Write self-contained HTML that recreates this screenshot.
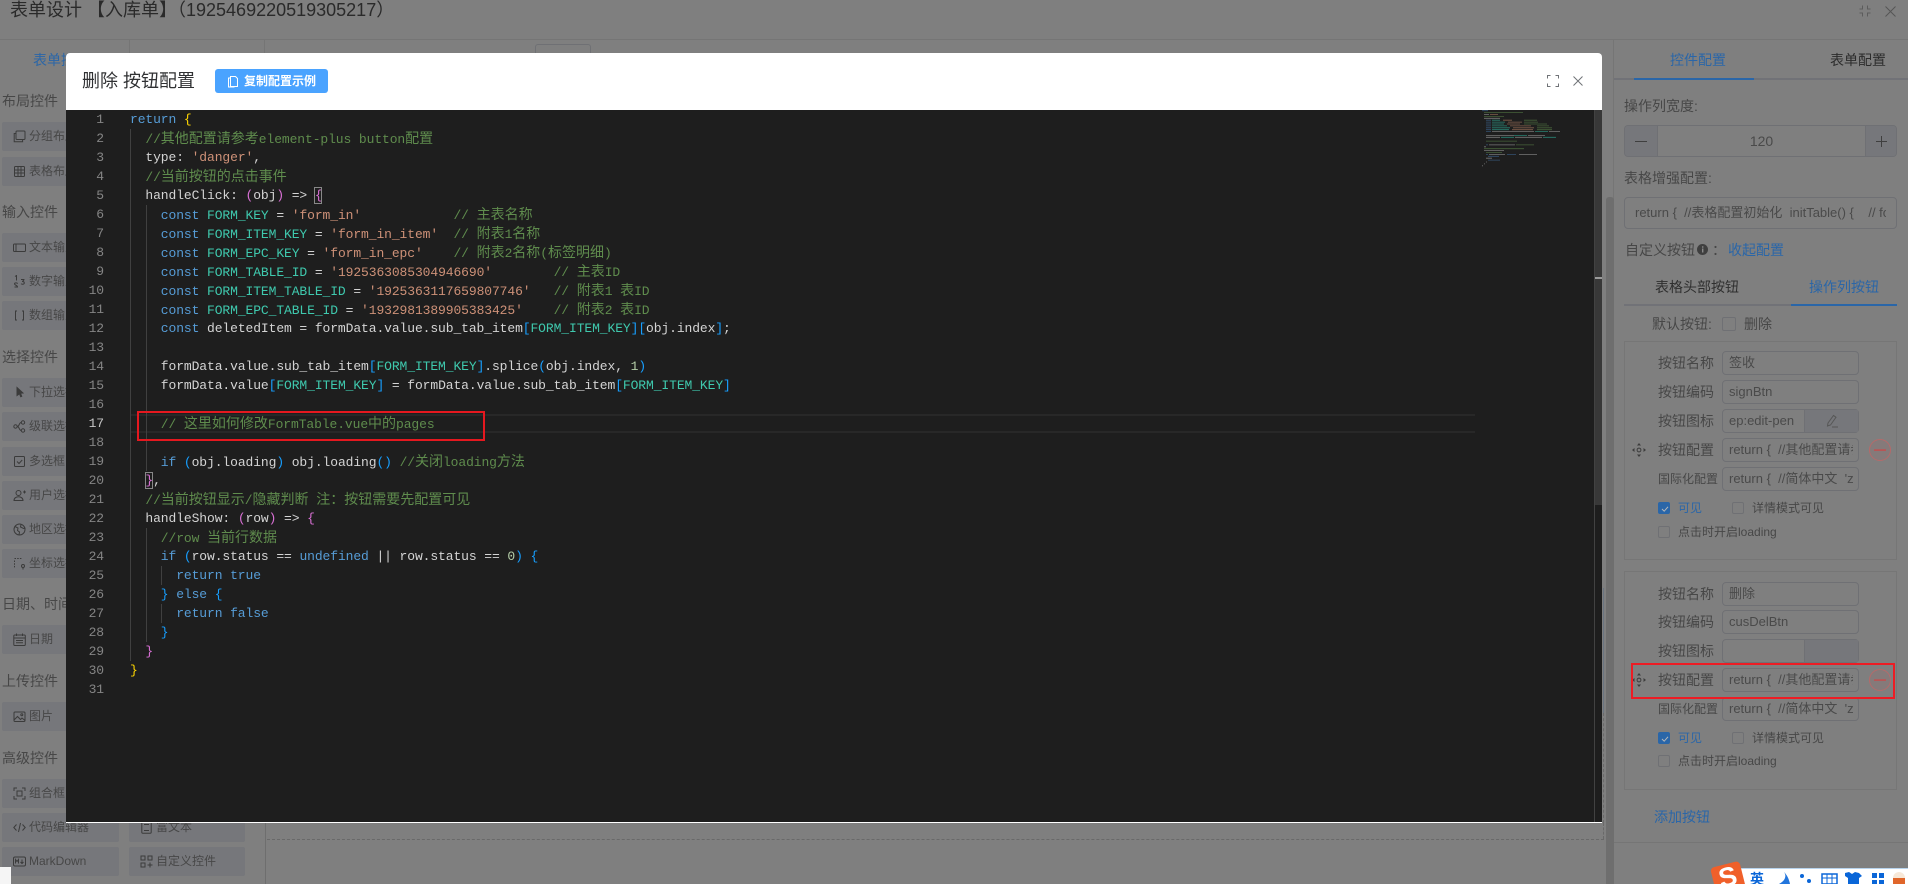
<!DOCTYPE html>
<html lang="zh-CN">
<head>
<meta charset="utf-8">
<title>表单设计</title>
<style>
html,body{margin:0;padding:0;width:1908px;height:884px;overflow:hidden;background:#7f7f7f}
body{position:relative;font-family:"Liberation Sans","Noto Sans CJK SC",sans-serif;font-size:14px;color:#474747}
.a{position:absolute}
.t{position:absolute;white-space:pre;line-height:20px}
.blue{color:#2a66a8 !important}
.lab{position:absolute;left:2px;white-space:pre;line-height:20px;font-size:14px;color:#474747}
.it{position:absolute;width:117px;height:29px;background:#76777b;left:2px;border-radius:2px;font-size:12px;line-height:29px;color:#474747;white-space:pre;overflow:hidden}
.it.r{left:129px;width:116px}
.it span{position:absolute;left:27px;top:0}
.it svg{position:absolute;left:11px;top:8px;width:13px;height:13px;fill:none;stroke:#3b3b3b;stroke-width:1}
.b{position:absolute;box-sizing:border-box;border:1px solid #6f7074;border-radius:4px;overflow:hidden}
.in{position:absolute;left:1722px;width:137px;height:24px;box-sizing:border-box;border:1px solid #6f7074;border-radius:4px;font-size:13px;line-height:22px;color:#4a4a4a;white-space:pre}
.in div{position:absolute;left:6px;right:5px;top:0;height:22px;overflow:hidden}
.fl{position:absolute;left:1658px;width:56px;font-size:14px;line-height:20px;white-space:pre;color:#474747}
.fl.fs{font-size:12px;width:60px}
.card{position:absolute;left:1624px;width:273px;box-sizing:border-box;border:1px solid #767676}
.cb{position:absolute;width:12px;height:12px;box-sizing:border-box;border:1px solid #6f7074;border-radius:2px}
.cb.on{background:#2a66a8;border-color:#2a66a8}
.cb.on svg{position:absolute;left:1px;top:1px}
.sm{position:absolute;font-size:12px;line-height:16px;white-space:pre;color:#474747}
#dlg{position:absolute;left:66px;top:53px;width:1536px;height:770px;background:#fff;border-radius:4px 4px 0 0;overflow:hidden}
#ed{position:absolute;left:66px;top:110px;width:1536px;height:712px;background:#1e1e1e}
.l{position:absolute;height:19px;line-height:19px;white-space:pre;font-family:"Liberation Mono","Noto Sans CJK SC",monospace;font-size:13px;letter-spacing:-.1px;color:#d4d4d4}
.n{position:absolute;left:72px;width:32px;text-align:right;height:19px;line-height:19px;font-family:"Liberation Mono",monospace;font-size:13px;letter-spacing:-.1px;color:#858585}
.l i{font-style:normal;font-family:"Noto Sans CJK SC",sans-serif;font-size:14px;letter-spacing:0}
.k{color:#569cd6}.v{color:#3fc9ae}.s{color:#ce9178}.g{color:#5f8c4d}.d{color:#b5cea8}
.y{color:#ffd700}.p{color:#da70d6}.u{color:#179fff}
.gd{position:absolute;width:1px;background:#404040}
</style>
</head>
<body>
<!-- top bar -->
<div class="t" style="left:10px;top:-3px;font-size:18px;line-height:26px;color:#2a2a2a">表单设计 【入库单】（1925469220519305217）</div>
<div class="a" style="left:0;top:39px;width:1908px;height:1px;background:#757575"></div>
<svg class="a" style="left:1859px;top:5px" width="12" height="12" viewBox="0 0 12 12" fill="none" stroke="#5c5c5c" stroke-width="1"><path d="M3.500 .5v3.500H.5M8.500 .5v3.500h3M3.500 11.500V8H.5M8.500 11.500V8h3"/></svg>
<svg class="a" style="left:1885px;top:6px" width="11" height="11" viewBox="0 0 11 11" fill="none" stroke="#565656" stroke-width="1"><path d="M.5.5l10 10M10.500.5l-10 10"/></svg>
<div class="a" style="left:129px;top:40px;width:1px;height:14px;background:#757575"></div>
<div class="a" style="left:264px;top:40px;width:1px;height:14px;background:#757575"></div>
<div class="a" style="left:535px;top:44px;width:56px;height:20px;box-sizing:border-box;border:1px solid #6f7074;border-radius:3px"></div>

<!-- left panel -->
<div class="t blue" style="left:33px;top:50px">表单控件</div>
<div class="lab" style="top:91px">布局控件</div>
<div class="it" style="top:122px"><svg viewBox="0 0 13 13"><rect x="3" y="1" width="9" height="8.500" rx="1"/><path d="M3 3.500H1.200v8.200h8.400V9.500"/></svg><span>分组布局</span></div>
<div class="it" style="top:157px"><svg viewBox="0 0 13 13"><rect x="1.500" y="1.500" width="10" height="10" rx="1"/><path d="M1.500 5h10M1.500 8h10M5 1.500v10M8 1.500v10"/></svg><span>表格布局</span></div>
<div class="lab" style="top:202px">输入控件</div>
<div class="it" style="top:233px"><svg viewBox="0 0 13 13"><rect x=".5" y="3" width="12" height="7.500" rx="1"/><path d="M3 3v7.500"/></svg><span>文本输入</span></div>
<div class="it" style="top:267px"><svg viewBox="0 0 13 13" stroke-width="1.200"><path d="M2 1.500l1.500-1v5M1.500 12h3c0-2-3-1.500-3-3.200 0-1.300 3-1.300 3 0M8 4.500h3c0 1-1.500 1.500-1.500 2 1 0 1.800.5 1.800 1.500 0 1.500-2.500 1.500-3.300.7"/></svg><span>数字输入</span></div>
<div class="it" style="top:301px"><svg viewBox="0 0 13 13"><path d="M4 2H2.500v9H4M9 2h1.500v9H9"/></svg><span>数组输入</span></div>
<div class="lab" style="top:347px">选择控件</div>
<div class="it" style="top:378px"><svg viewBox="0 0 13 13"><path d="M4 1.500l6 5.500-2.500.3 1.200 3-1 .4-1.200-3L4 9.500z" fill="#3b3b3b"/></svg><span>下拉选择</span></div>
<div class="it" style="top:412px"><svg viewBox="0 0 13 13"><circle cx="2.500" cy="6.500" r="1.700"/><circle cx="10" cy="2.500" r="1.700"/><circle cx="10" cy="10.500" r="1.700"/><path d="M4.200 6.500c2.500 0 1.500-4 4.100-4M4.200 6.500c2.500 0 1.500 4 4.100 4"/></svg><span>级联选择</span></div>
<div class="it" style="top:447px"><svg viewBox="0 0 13 13"><rect x="1.500" y="1.500" width="10" height="10" rx="1"/><path d="M4 6.500l2 2 3.200-3.500"/></svg><span>多选框</span></div>
<div class="it" style="top:481px"><svg viewBox="0 0 13 13"><circle cx="5.500" cy="4" r="2.500"/><path d="M1 11.500c0-5 9-5 9 0zM10 3h3M11.500 1.500v3"/></svg><span>用户选择</span></div>
<div class="it" style="top:515px"><svg viewBox="0 0 13 13"><circle cx="6.500" cy="6.500" r="5.500"/><path d="M2 3.500l3 1.500-.5 2.500 2 1.500-.5 3M8 1.500L7.500 4l3 1.500 2-.5"/></svg><span>地区选择</span></div>
<div class="it" style="top:549px"><svg viewBox="0 0 13 13"><path d="M1.500 1.500h8M1.500 3.500v7" stroke-dasharray="1.500 1.200"/><circle cx="10" cy="9" r="1.500"/><path d="M10 10.500v2"/></svg><span>坐标选择</span></div>
<div class="lab" style="top:594px">日期、时间控件</div>
<div class="it" style="top:625px"><svg viewBox="0 0 13 13"><rect x=".8" y="2" width="11.500" height="10.500" rx="1"/><path d="M.8 5h11.500M3.500.5v2.500M9.500.5v2.500M3 7.500h7M3 9.800h7"/></svg><span>日期</span></div>
<div class="lab" style="top:671px">上传控件</div>
<div class="it" style="top:702px"><svg viewBox="0 0 13 13"><rect x="1" y="2" width="11" height="9.500" rx="1"/><circle cx="8.800" cy="4.800" r="1"/><path d="M1 10l3.500-3.500 3 3 1.500-1.500 3 2.500"/></svg><span>图片</span></div>
<div class="lab" style="top:748px">高级控件</div>
<div class="it" style="top:779px"><svg viewBox="0 0 13 13" stroke-width="1.200"><path d="M1 4V1h3M9 1h3v3M12 9v3H9M4 12H1V9M4 4h5v5H4z"/></svg><span>组合框</span></div>
<div class="it" style="top:813px"><svg viewBox="0 0 13 13"><path d="M3.500 3.500L.8 6.500l2.700 3M9.500 3.500l2.700 3-2.700 3M7.500 2l-2 9"/></svg><span>代码编辑器</span></div>
<div class="it r" style="top:813px"><svg viewBox="0 0 13 13"><rect x="1.800" y=".8" width="9.400" height="11.400" rx="1"/><path d="M4 3.500h5M4 9.500h5"/></svg><span>富文本</span></div>
<div class="it" style="top:847px"><svg viewBox="0 0 13 13"><rect x=".5" y="2" width="12" height="9" rx="1.500"/><path d="M2.500 8.500v-4l1.500 2 1.500-2v4M9 4.500v4M7.500 7L9 8.500 10.500 7"/></svg><span>MarkDown</span></div>
<div class="it r" style="top:847px"><svg viewBox="0 0 13 13" stroke-width="1.200"><rect x="1" y="1" width="4" height="4"/><rect x="8" y="1" width="4" height="4"/><rect x="1" y="8" width="4" height="4"/><path d="M10 7.500v5M7.500 10h5"/></svg><span>自定义控件</span></div>

<!-- canvas area fragments -->
<div class="a" style="left:265px;top:823px;width:1px;height:61px;background:#6e6e6e"></div>
<div class="a" style="left:267px;top:839px;width:1337px;height:0;border-top:1px dashed #696969"></div>
<div class="a" style="left:1603px;top:823px;width:0;height:16px;border-left:1px dashed #696969"></div>
<div class="a" style="left:1603px;top:588px;width:1px;height:125px;background:#6a7480"></div>
<div class="a" style="left:1603px;top:713px;width:0;height:110px;border-left:1px dashed #696969"></div>
<div class="a" style="left:0;top:867px;width:11px;height:17px;background:#f5f5f5"></div>

<!-- right panel -->
<div class="a" style="left:1613px;top:40px;width:1px;height:844px;background:#757575"></div>
<div class="a" style="left:1606px;top:197px;width:8px;height:687px;background:#6e6e6e;border-radius:3px 3px 0 0"></div>
<div class="t blue" style="left:1670px;top:50px">控件配置</div>
<div class="t" style="left:1830px;top:50px;color:#2c2c2c">表单配置</div>
<div class="a" style="left:1614px;top:78px;width:294px;height:2px;background:#717277"></div>
<div class="a" style="left:1634px;top:78px;width:120px;height:2px;background:#2a66a8"></div>

<div class="t" style="left:1624px;top:96px">操作列宽度:</div>
<div class="b" style="left:1624px;top:125px;width:273px;height:32px">
  <div class="a" style="left:0;top:0;width:32px;height:30px;background:#76777b;border-right:1px solid #6f7074"></div>
  <div class="a" style="left:240px;top:0;width:32px;height:30px;background:#76777b;border-left:1px solid #6f7074"></div>
  <div class="a" style="left:10px;top:15px;width:12px;height:1px;background:#3f3f3f"></div>
  <div class="a" style="left:251px;top:15px;width:11px;height:1px;background:#3f3f3f"></div>
  <div class="a" style="left:256px;top:10px;width:1px;height:11px;background:#3f3f3f"></div>
  <div class="a" style="left:33px;top:0;width:207px;text-align:center;line-height:30px;color:#4a4a4a">120</div>
</div>
<div class="t" style="left:1624px;top:168px">表格增强配置:</div>
<div class="b" style="left:1624px;top:197px;width:273px;height:32px;font-size:13px;line-height:30px;color:#4a4a4a;white-space:pre"><div class="a" style="left:10px;right:10px;top:0;height:30px;overflow:hidden">return {  //表格配置初始化  initTable() {    // form</div></div>
<div class="t" style="left:1625px;top:240px">自定义按钮</div>
<svg class="a" style="left:1697px;top:244px" width="11" height="11" viewBox="0 0 11 11"><circle cx="5.500" cy="5.500" r="5.500" fill="#3f3f3f"/><rect x="5" y="4.500" width="1.400" height="4" fill="#8a8a8a"/><rect x="5" y="2.300" width="1.400" height="1.400" fill="#8a8a8a"/></svg>
<div class="t" style="left:1712px;top:240px">：</div>
<div class="t blue" style="left:1728px;top:240px">收起配置</div>
<div class="t" style="left:1655px;top:277px;color:#2f2f2f">表格头部按钮</div>
<div class="t blue" style="left:1809px;top:277px">操作列按钮</div>
<div class="a" style="left:1624px;top:304px;width:273px;height:2px;background:#717277"></div>
<div class="a" style="left:1791px;top:304px;width:106px;height:2px;background:#2a66a8"></div>
<div class="t" style="left:1652px;top:314px">默认按钮:</div>
<div class="cb" style="left:1722px;top:317px;width:14px;height:14px"></div>
<div class="t" style="left:1744px;top:314px">删除</div>

<div class="card" style="top:341px;height:219px"></div>
<div class="fl" style="top:353px">按钮名称</div><div class="in" style="top:351px"><div>签收</div></div>
<div class="fl" style="top:382px">按钮编码</div><div class="in" style="top:380px"><div>signBtn</div></div>
<div class="fl" style="top:411px">按钮图标</div><div class="in" style="top:409px"><div style="right:56px">ep:edit-pen</div><div style="left:81px;right:0;top:0;background:#76777b;border-left:1px solid #6f7074;height:22px"></div></div>
<svg class="a" style="left:1825px;top:414px" width="14" height="14" viewBox="0 0 14 14" fill="none" stroke="#565656" stroke-width="1"><path d="M3 9L8.500 1.500l2.500 1.800L5.500 11l-3 1zM7 13h6"/></svg>
<div class="fl" style="top:440px">按钮配置</div><div class="in" style="top:438px"><div>return {  //其他配置请参考</div></div>
<div class="fl fs" style="top:469px">国际化配置</div><div class="in" style="top:467px"><div>return {  //简体中文  'zh</div></div>
<svg class="a" style="left:1632px;top:443px" width="14" height="14" viewBox="0 0 14 14" fill="#3c3c3c"><path d="M7 0l2 2.500H5zM7 14l2-2.500H5zM0 7l2.500-2v4zM14 7l-2.500-2v4z"/><circle cx="7" cy="7" r="1.900" fill="none" stroke="#3c3c3c"/></svg>
<svg class="a" style="left:1869px;top:439px" width="22" height="22" viewBox="0 0 22 22"><circle cx="11" cy="11" r="10.500" fill="#857a7a" stroke="#b56a6a"/><rect x="5" y="10.200" width="12" height="1.800" fill="#b85555"/></svg>
<div class="cb on" style="left:1658px;top:502px"><svg width="10" height="10" viewBox="0 0 10 10" fill="none" stroke="#b8b8b8" stroke-width="1"><path d="M2 5l2.200 2.200L8 2.800"/></svg></div>
<div class="sm blue" style="left:1678px;top:500px">可见</div>
<div class="cb" style="left:1732px;top:502px"></div>
<div class="sm" style="left:1752px;top:500px">详情模式可见</div>
<div class="cb" style="left:1658px;top:526px"></div>
<div class="sm" style="left:1678px;top:524px">点击时开启loading</div>

<div class="card" style="top:571px;height:219px"></div>
<div class="fl" style="top:584px">按钮名称</div><div class="in" style="top:582px"><div>删除</div></div>
<div class="fl" style="top:612px">按钮编码</div><div class="in" style="top:610px"><div>cusDelBtn</div></div>
<div class="fl" style="top:641px">按钮图标</div><div class="in" style="top:639px"><div style="left:81px;right:0;top:0;background:#76777b;border-left:1px solid #6f7074;height:22px"></div></div>
<div class="fl" style="top:670px">按钮配置</div><div class="in" style="top:668px"><div>return {  //其他配置请参考</div></div>
<div class="fl fs" style="top:699px">国际化配置</div><div class="in" style="top:697px"><div>return {  //简体中文  'zh</div></div>
<svg class="a" style="left:1632px;top:673px" width="14" height="14" viewBox="0 0 14 14" fill="#3c3c3c"><path d="M7 0l2 2.500H5zM7 14l2-2.500H5zM0 7l2.500-2v4zM14 7l-2.500-2v4z"/><circle cx="7" cy="7" r="1.900" fill="none" stroke="#3c3c3c"/></svg>
<svg class="a" style="left:1869px;top:669px" width="22" height="22" viewBox="0 0 22 22"><circle cx="11" cy="11" r="10.500" fill="#857a7a" stroke="#b56a6a"/><rect x="5" y="10.200" width="12" height="1.800" fill="#b85555"/></svg>
<div class="cb on" style="left:1658px;top:732px"><svg width="10" height="10" viewBox="0 0 10 10" fill="none" stroke="#b8b8b8" stroke-width="1"><path d="M2 5l2.200 2.200L8 2.800"/></svg></div>
<div class="sm blue" style="left:1678px;top:730px">可见</div>
<div class="cb" style="left:1732px;top:732px"></div>
<div class="sm" style="left:1752px;top:730px">详情模式可见</div>
<div class="cb" style="left:1658px;top:755px"></div>
<div class="sm" style="left:1678px;top:753px">点击时开启loading</div>
<div class="t blue" style="left:1654px;top:807px">添加按钮</div>
<div class="a" style="left:1614px;top:842px;width:294px;height:1px;background:#757575"></div>

<!-- dialog -->
<div id="dlg">
  <div class="t" style="left:16px;top:15px;font-size:18px;line-height:26px;color:#303133">删除 按钮配置</div>
  <div class="a" style="left:149px;top:16px;width:113px;height:24px;background:#4aa3ff;border-radius:3px;color:#fff;font-size:12px;line-height:24px;font-weight:bold">
    <svg class="a" style="left:12px;top:6px" width="12" height="13" viewBox="0 0 12 13" fill="none" stroke="#fff" stroke-width="1"><path d="M3.500 1.500h5l2 2v8h-7zM3.500 3H1.500v9h6"/></svg>
    <span class="a" style="left:29px;top:0;white-space:pre">复制配置示例</span>
  </div>
  <svg class="a" style="left:1481px;top:22px" width="12" height="12" viewBox="0 0 12 12" fill="none" stroke="#6f7276" stroke-width="1"><path d="M.5 3.500V.5h3M8.500.5h3v3M11.500 8.500v3h-3M3.500 11.500h-3v-3"/></svg>
  <svg class="a" style="left:1507px;top:23px" width="10" height="10" viewBox="0 0 10 10" fill="none" stroke="#6f7276" stroke-width="1"><path d="M.5.500l9 9M9.500.500l-9 9"/></svg>
</div>
<div id="ed"></div>
<div class="a" style="left:66px;top:822px;width:1534px;height:1px;background:#fff"></div>
<div class="a" style="left:1594px;top:110px;width:8px;height:395px;background:#383838"></div>
<div class="a" style="left:1594px;top:110px;width:1px;height:712px;background:#424242"></div>
<div class="a" style="left:1595px;top:277px;width:7px;height:2px;background:#9a9a9a"></div>

<!-- active line -->
<div class="a" style="left:130px;top:414px;width:1345px;height:19px;box-sizing:border-box;border-top:2px solid #282828;border-bottom:2px solid #282828"></div>

<!-- guides -->
<div class="gd" style="left:130px;top:129px;height:532px"></div>
<div class="gd" style="left:146px;top:205px;height:266px"></div>
<div class="gd" style="left:146px;top:528px;height:114px"></div>
<div class="gd" style="left:161px;top:566px;height:19px"></div>
<div class="gd" style="left:161px;top:604px;height:19px"></div>

<!-- line numbers -->
<div class="n" style="top:110px">1</div><div class="n" style="top:129px">2</div><div class="n" style="top:148px">3</div><div class="n" style="top:167px">4</div><div class="n" style="top:186px">5</div><div class="n" style="top:205px">6</div><div class="n" style="top:224px">7</div><div class="n" style="top:243px">8</div><div class="n" style="top:262px">9</div><div class="n" style="top:281px">10</div><div class="n" style="top:300px">11</div><div class="n" style="top:319px">12</div><div class="n" style="top:338px">13</div><div class="n" style="top:357px">14</div><div class="n" style="top:376px">15</div><div class="n" style="top:395px">16</div><div class="n" style="top:414px;color:#c6c6c6">17</div><div class="n" style="top:433px">18</div><div class="n" style="top:452px">19</div><div class="n" style="top:471px">20</div><div class="n" style="top:490px">21</div><div class="n" style="top:509px">22</div><div class="n" style="top:528px">23</div><div class="n" style="top:547px">24</div><div class="n" style="top:566px">25</div><div class="n" style="top:585px">26</div><div class="n" style="top:604px">27</div><div class="n" style="top:623px">28</div><div class="n" style="top:642px">29</div><div class="n" style="top:661px">30</div><div class="n" style="top:680px">31</div>

<!-- code -->
<div class="l" style="left:130px;top:110px"><span class="k">return</span> <span class="y">{</span></div>
<div class="l" style="left:145.400px;top:129px"><span class="g">//<i>其他配置请参考</i>element-plus button<i>配置</i></span></div>
<div class="l" style="left:145.400px;top:148px">type: <span class="s">'danger'</span>,</div>
<div class="l" style="left:145.400px;top:167px"><span class="g">//<i>当前按钮的点击事件</i></span></div>
<div class="l" style="left:145.400px;top:186px">handleClick: <span class="p">(</span>obj<span class="p">)</span> =&gt; <span class="p">{</span></div>
<div class="a" style="left:314px;top:187px;width:8px;height:17px;box-sizing:border-box;border:1px solid #888"></div>
<div class="l" style="left:160.800px;top:205px"><span class="k">const</span> <span class="v">FORM_KEY</span> = <span class="s">'form_in'</span>            <span class="g">// <i>主表名称</i></span></div>
<div class="l" style="left:160.800px;top:224px"><span class="k">const</span> <span class="v">FORM_ITEM_KEY</span> = <span class="s">'form_in_item'</span>  <span class="g">// <i>附表</i>1<i>名称</i></span></div>
<div class="l" style="left:160.800px;top:243px"><span class="k">const</span> <span class="v">FORM_EPC_KEY</span> = <span class="s">'form_in_epc'</span>    <span class="g">// <i>附表</i>2<i>名称</i>(<i>标签明细</i>)</span></div>
<div class="l" style="left:160.800px;top:262px"><span class="k">const</span> <span class="v">FORM_TABLE_ID</span> = <span class="s">'1925363085304946690'</span>        <span class="g">// <i>主表</i>ID</span></div>
<div class="l" style="left:160.800px;top:281px"><span class="k">const</span> <span class="v">FORM_ITEM_TABLE_ID</span> = <span class="s">'1925363117659807746'</span>   <span class="g">// <i>附表</i>1 <i>表</i>ID</span></div>
<div class="l" style="left:160.800px;top:300px"><span class="k">const</span> <span class="v">FORM_EPC_TABLE_ID</span> = <span class="s">'1932981389905383425'</span>    <span class="g">// <i>附表</i>2 <i>表</i>ID</span></div>
<div class="l" style="left:160.800px;top:319px"><span class="k">const</span> deletedItem = formData.value.sub_tab_item<span class="u">[</span><span class="v">FORM_ITEM_KEY</span><span class="u">]</span><span class="u">[</span>obj.index<span class="u">]</span>;</div>
<div class="l" style="left:160.800px;top:357px">formData.value.sub_tab_item<span class="u">[</span><span class="v">FORM_ITEM_KEY</span><span class="u">]</span>.splice<span class="u">(</span>obj.index, <span class="d">1</span><span class="u">)</span></div>
<div class="l" style="left:160.800px;top:376px">formData.value<span class="u">[</span><span class="v">FORM_ITEM_KEY</span><span class="u">]</span> = formData.value.sub_tab_item<span class="u">[</span><span class="v">FORM_ITEM_KEY</span><span class="u">]</span></div>
<div class="l" style="left:160.800px;top:414px"><span class="g">// <i>这里如何修改</i>FormTable.vue<i>中的</i>pages</span></div>
<div class="l" style="left:160.800px;top:452px"><span class="k">if</span> <span class="u">(</span>obj.loading<span class="u">)</span> obj.loading<span class="u">()</span> <span class="g">//<i>关闭</i>loading<i>方法</i></span></div>
<div class="l" style="left:145.400px;top:471px"><span class="p">}</span>,</div>
<div class="a" style="left:145px;top:472px;width:8px;height:17px;box-sizing:border-box;border:1px solid #888"></div>
<div class="l" style="left:145.400px;top:490px"><span class="g">//<i>当前按钮显示</i>/<i>隐藏判断</i> <i>注：按钮需要先配置可见</i></span></div>
<div class="l" style="left:145.400px;top:509px">handleShow: <span class="p">(</span>row<span class="p">)</span> =&gt; <span class="p">{</span></div>
<div class="l" style="left:160.800px;top:528px"><span class="g">//row <i>当前行数据</i></span></div>
<div class="l" style="left:160.800px;top:547px"><span class="k">if</span> <span class="u">(</span>row.status == <span class="k">undefined</span> || row.status == <span class="d">0</span><span class="u">)</span> <span class="u">{</span></div>
<div class="l" style="left:176.200px;top:566px"><span class="k">return</span> <span class="k">true</span></div>
<div class="l" style="left:160.800px;top:585px"><span class="u">}</span> <span class="k">else</span> <span class="u">{</span></div>
<div class="l" style="left:176.200px;top:604px"><span class="k">return</span> <span class="k">false</span></div>
<div class="l" style="left:160.800px;top:623px"><span class="u">}</span></div>
<div class="l" style="left:145.400px;top:642px"><span class="p">}</span></div>
<div class="l" style="left:130px;top:661px"><span class="y">}</span></div>

<!-- minimap -->
<svg class="a" style="left:1482px;top:110px" width="80" height="62" viewBox="0 0 80 62" fill="none" stroke-width=".8" opacity=".8">
<path stroke="#3a5f85" d="M0 .7h6M4 10.200h5M4 12.100h5M4 14h5M4 15.900h5M4 17.800h5M4 19.700h5M4 21.600h5M4 34.900h2M4 44.400h2M25 44.400h9M6 46.300h11M6 50.100h12"/>
<path stroke="#2d9a88" d="M10 10.200h8M10 12.100h13M10 14h12M10 15.900h15M10 17.800h18M10 19.700h17M53 21.600h13M32 25.400h13M19 27.300h13M61 27.300h13"/>
<path stroke="#9a6f58" d="M8 4.500h8M21 10.200h9M26 12.100h14M25 14h13M28 15.900h21M31 17.800h21M30 19.700h21"/>
<path stroke="#4f7341" d="M2 2.600h39M2 6.400h20M42 10.200h13M42 12.100h14M42 14h23M55 15.900h12M55 17.800h15M55 19.700h15M4 31.100h31M34 34.900h18M2 38.700h40M4 42.500h16"/>
<path stroke="#8c8c8c" d="M2 4.500h5M2 8.300h16M10 21.600h42M67 21.600h11M4 25.400h28M46 25.400h17M4 27.300h14M33 27.300h27M7 34.900h26M2 36.800h2M2 40.600h20M7 44.400h16M37 44.400h18M4 48.200h6M4 52h1M2 53.900h1M0 55.800h1"/>
</svg>

<!-- red annotation boxes -->
<div class="a" style="left:137px;top:411px;width:348px;height:30px;box-sizing:border-box;border:2px solid #e5181f"></div>
<div class="a" style="left:1631px;top:663px;width:264px;height:36px;box-sizing:border-box;border:2px solid #ed1c24"></div>

<!-- IME bar -->
<div class="a" style="left:1740px;top:868px;width:168px;height:16px;background:#fff;border-top:1px solid #b8d4ee;box-sizing:border-box"></div>
<div class="a" style="left:1713px;top:864px;width:30px;height:28px;background:#f0602a;border-radius:4px;transform:rotate(-14deg);color:#fff;font:bold 27px/27px 'Liberation Sans',sans-serif;text-align:center">S</div>
<div class="a" style="left:1750px;top:871px;font-size:14px;line-height:16px;font-weight:bold;color:#0a66d8">英</div>
<svg class="a" style="left:1775px;top:872px" width="130" height="12" viewBox="0 0 130 12">
<path d="M9 0c3 4 1 9-5 12h11c-1-5-3-9-6-12z" fill="#0a66d8" opacity=".9"/>
<circle cx="27" cy="4" r="2" fill="#0a66d8"/><circle cx="34" cy="9" r="2" fill="#0a66d8"/>
<rect x="47" y="2" width="15" height="10" fill="none" stroke="#0a66d8" stroke-width="1.500"/><path d="M47 6h15M52 2v10M57 2v10" stroke="#0a66d8" fill="none"/>
<path d="M70 1l4-1 3 2 3-2 4 1 3 3-3 2v6H73V6l-3-2z" fill="#0a66d8"/>
<rect x="97" y="1" width="5" height="5" fill="#0a66d8"/><rect x="104" y="1" width="5" height="5" fill="#0a66d8"/><rect x="97" y="8" width="5" height="5" fill="#0a66d8"/><rect x="104" y="8" width="5" height="5" fill="#0a66d8"/>
<circle cx="124" cy="6" r="6" fill="#f7e8d8"/><rect x="118" y="6" width="12" height="6" fill="#e0662a"/>
</svg>
</body>
</html>
